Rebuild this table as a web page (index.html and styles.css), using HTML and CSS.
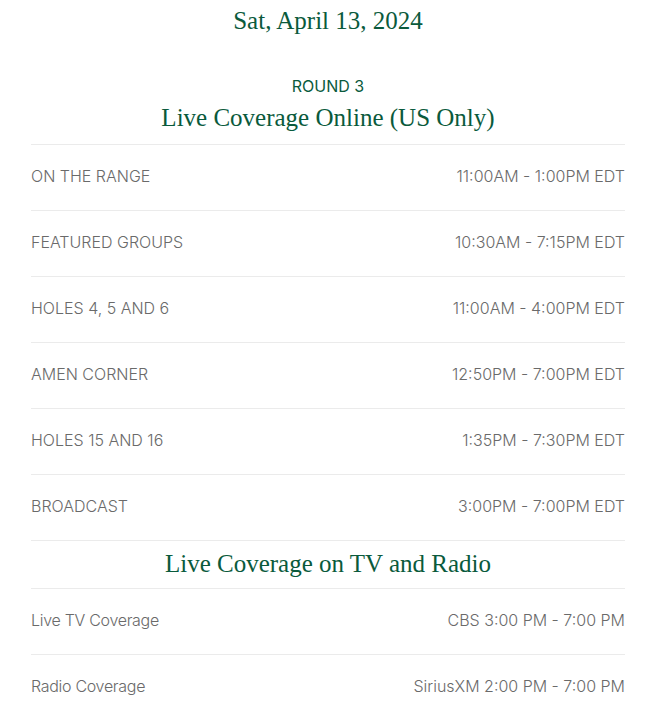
FILE: index.html
```html
<!DOCTYPE html>
<html>
<head>
<meta charset="utf-8">
<link rel="stylesheet" href="styles.css">
</head>
<body>
<div class="page">
  <h1 class="date">Sat, April 13, 2024</h1>
  <div class="round">ROUND 3</div>
  <h2 class="section-title">Live Coverage Online (US Only)</h2>
  <ul class="list">
    <li class="row"><span class="name">ON THE RANGE</span><span class="time">11:00AM - 1:00PM EDT</span></li>
    <li class="row"><span class="name">FEATURED GROUPS</span><span class="time">10:30AM - 7:15PM EDT</span></li>
    <li class="row"><span class="name">HOLES 4, 5 AND 6</span><span class="time">11:00AM - 4:00PM EDT</span></li>
    <li class="row"><span class="name">AMEN CORNER</span><span class="time">12:50PM - 7:00PM EDT</span></li>
    <li class="row"><span class="name">HOLES 15 AND 16</span><span class="time">1:35PM - 7:30PM EDT</span></li>
    <li class="row"><span class="name">BROADCAST</span><span class="time">3:00PM - 7:00PM EDT</span></li>
  </ul>
  <h2 class="section-title tv">Live Coverage on TV and Radio</h2>
  <ul class="list">
    <li class="row"><span class="name lower">Live TV Coverage</span><span class="time">CBS 3:00 PM - 7:00 PM</span></li>
    <li class="row"><span class="name lower">Radio Coverage</span><span class="time">SiriusXM 2:00 PM - 7:00 PM</span></li>
  </ul>
</div>
</body>
</html>
```
FILE: styles.css
```css
html, body {
  margin: 0;
  padding: 0;
  background: #fff;
}
.page {
  margin-left: 31px;
  width: 594px;
}
.date {
  margin: 0;
  padding-top: 5px;
  height: 35px;
  line-height: 32px;
  text-align: center;
  font-family: "Liberation Serif", serif;
  font-weight: 400;
  font-size: 25px;
  color: #0a5a3c;
}
.round {
  margin-top: 36px;
  text-align: center;
  font-family: "Inter", sans-serif;
  font-size: 16px;
  line-height: 20px;
  color: #0a5a3c;
}
.section-title {
  margin: 6px 0 0;
  text-align: center;
  font-family: "Liberation Serif", serif;
  font-weight: 400;
  font-size: 25px;
  line-height: 32px;
  color: #0a5a3c;
  padding-bottom: 10px;
  border-bottom: 1px solid #ebebeb;
}
.section-title.tv {
  margin-top: 0;
  padding-top: 7px;
  padding-bottom: 8px;
}
.list {
  list-style: none;
  margin: 0;
  padding: 0;
}
.row {
  display: flex;
  justify-content: space-between;
  align-items: center;
  box-sizing: border-box;
  height: 66px;
  padding-bottom: 4px;
  border-bottom: 1px solid #ebebeb;
  font-family: "Inter", sans-serif;
  font-weight: 300;
  font-size: 16px;
  color: #6a6a6a;
}
.name.lower {
  letter-spacing: -0.3px;
}
```
